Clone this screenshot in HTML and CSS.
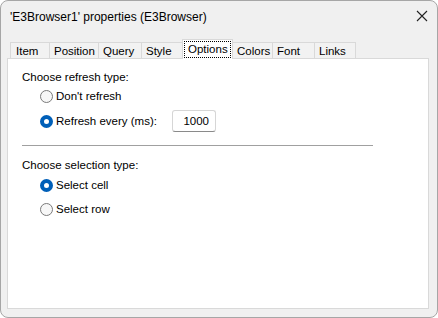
FILE: index.html
```html
<!DOCTYPE html>
<html>
<head>
<meta charset="utf-8">
<link rel="stylesheet" href="styles.css">
</head>
<body>
<div class="window">
  <div class="titlebar">
    <span class="title">'E3Browser1' properties (E3Browser)</span>
    <svg class="close" width="12" height="12" viewBox="0 0 12 12"><path d="M1 1 L11 11 M11 1 L1 11" stroke="#222" stroke-width="1.1" fill="none"/></svg>
  </div>
  <div class="tabs">
    <div class="tab t-item">Item</div>
    <div class="tab t-position">Position</div>
    <div class="tab t-query">Query</div>
    <div class="tab t-style">Style</div>
    <div class="tab active t-options"><span class="focus">Options</span></div>
    <div class="tab t-colors">Colors</div>
    <div class="tab t-font">Font</div>
    <div class="tab t-links">Links</div>
  </div>
  <div class="panel">
    <div class="group-label">Choose refresh type:</div>
    <div class="row">
      <span class="radio"></span><span class="label">Don't refresh</span>
    </div>
    <div class="row row-input">
      <span class="radio checked"></span><span class="label label-fixed">Refresh every (ms):</span>
      <span class="input">1000</span>
    </div>
    <div class="separator"></div>
    <div class="group-label second">Choose selection type:</div>
    <div class="row row-tight">
      <span class="radio checked"></span><span class="label">Select cell</span>
    </div>
    <div class="row row-tight">
      <span class="radio"></span><span class="label">Select row</span>
    </div>
  </div>
</div>
</body>
</html>
```
FILE: styles.css
```css
html, body {
  margin: 0;
  padding: 0;
  background: #ffffff;
}
body {
  font-family: "Liberation Sans", Arial, sans-serif;
  font-size: 11.5px;
  color: #000;
}
.window {
  box-sizing: border-box;
  width: 438px;
  height: 318px;
  border: 1px solid #a6a6a6;
  border-radius: 8px;
  background: #f0f0f0;
  display: flex;
  flex-direction: column;
  overflow: hidden;
}
.titlebar {
  height: 30px;
  display: flex;
  align-items: center;
  padding-left: 9px;
  padding-right: 9px;
  flex-shrink: 0;
}
.title {
  flex: 1;
  line-height: 16px;
  padding-top: 1px;
  font-size: 12px;
}
.close {
  display: block;
}
.tabs {
  display: flex;
  align-items: flex-end;
  padding-left: 9px;
  height: 28px;
  margin-bottom: -1px;
  flex-shrink: 0;
}
.tab {
  box-sizing: border-box;
  height: 17px;
  border: 1px solid #d9d9d9;
  border-bottom: none;
  border-left: none;
  background: #f2f2f2;
  padding-left: 4px;
  line-height: 17px;
  white-space: nowrap;
}
.t-item { width: 40px; border-left: 1px solid #d9d9d9; padding-left: 5px; }
.t-position { width: 49px; }
.t-query { width: 43px; }
.t-style { width: 41px; }
.t-colors { width: 40px; }
.t-font { width: 42px; }
.t-links { width: 41px; }
.tab.active {
  width: 51px;
  height: 20px;
  background: #ffffff;
  border-left: 1px solid #d9d9d9;
  margin-left: -1px;
  padding: 1px 1px 0 1px;
  position: relative;
  z-index: 1;
}
.focus {
  display: block;
  box-sizing: border-box;
  height: 17px;
  border: 1px dotted #000;
  padding-left: 3px;
  line-height: 14px;
}
.panel {
  flex: 1;
  margin: 0 8px 8px 6px;
  border: 1px solid #d9d9d9;
  background: #ffffff;
  padding: 10px 14px 0 14px;
}
.group-label {
  height: 16px;
  line-height: 16px;
}
.group-label.second {
  margin-top: 11px;
}
.row {
  display: flex;
  align-items: center;
  height: 22px;
  padding-left: 18px;
}
.row-input {
  margin-top: 3px;
}
.row-tight {
  height: 24px;
}
.radio {
  box-sizing: border-box;
  width: 13px;
  height: 13px;
  border-radius: 50%;
  border: 1px solid #7a7a7a;
  background: #f7f7f7;
  flex-shrink: 0;
}
.radio.checked {
  border: 4px solid #005fb8;
  background: #ffffff;
}
.label {
  margin-left: 3px;
  white-space: nowrap;
}
.label-fixed {
  width: 116px;
}
.input {
  box-sizing: border-box;
  width: 44px;
  height: 22px;
  border: 1px solid #d6d6d6;
  border-bottom-color: #8a8a8a;
  border-radius: 3px;
  background: #fff;
  text-align: right;
  padding-right: 6px;
  line-height: 20px;
}
.separator {
  width: 351px;
  height: 1px;
  background: #a0a0a0;
  margin-top: 13px;
}
```
